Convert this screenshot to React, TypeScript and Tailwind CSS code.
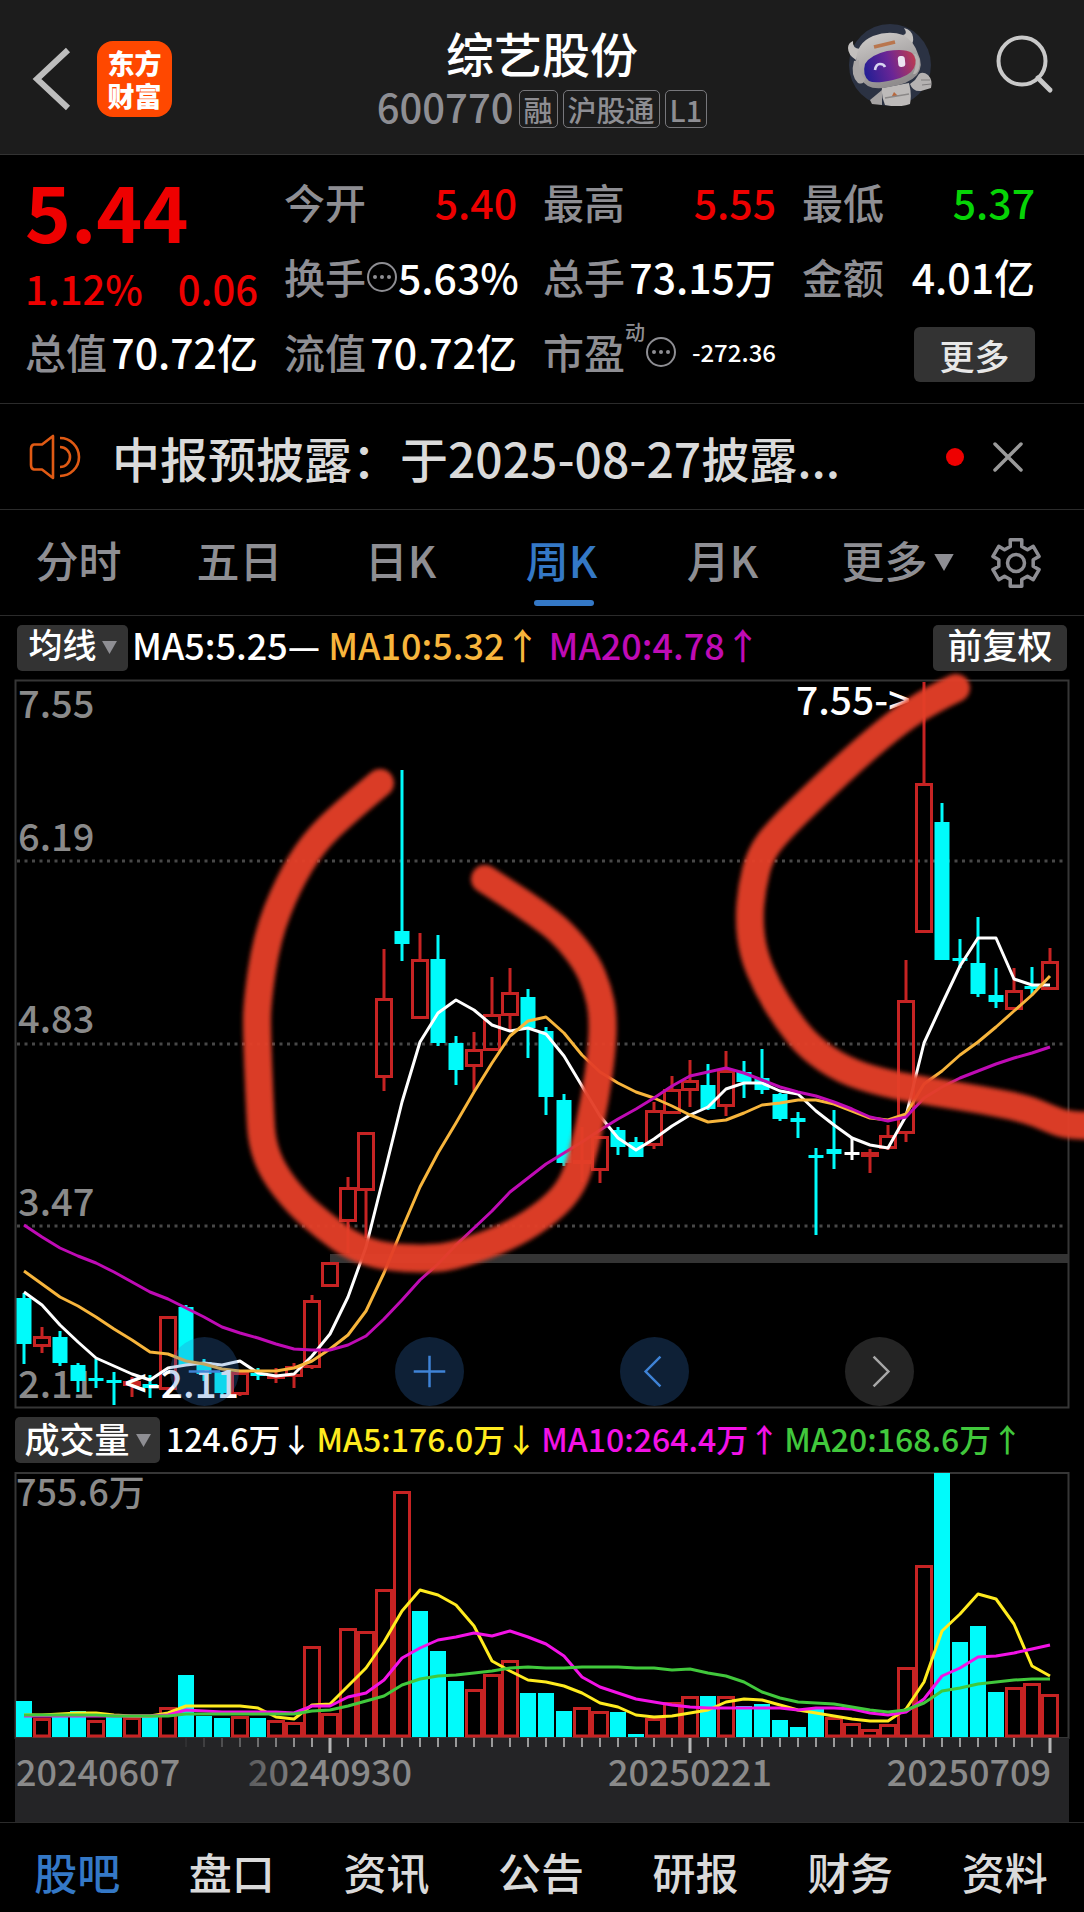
import * as React from "react";
import clsx from "clsx";

type Point = [number, number];

// top, bottom of the body, then high, low of the wick
interface Candle {
    kind: "up" | "down" | "flat";
    body: [number, number];
    wick: [number, number];
}

interface Volume {
    up: boolean;
    top: number;
}

const RED = "#c62323";
const CYAN = "#00fbfb";
const STEP = 18;
const FIRST_X = 24;

const xAt = (index: number) => FIRST_X + index * STEP;

const up = (t: number, b: number, h: number, l: number): Candle => ({ kind: "up", body: [t, b], wick: [h, l] });
const down = (t: number, b: number, h: number, l: number): Candle => ({ kind: "down", body: [t, b], wick: [h, l] });
const flat = (t: number, b: number, h: number, l: number): Candle => ({ kind: "flat", body: [t, b], wick: [h, l] });

const candles: Candle[] = [
    down(1298, 1344, 1293, 1364),
    up(1336, 1347, 1327, 1353),
    down(1337, 1363, 1331, 1366),
    down(1365, 1381, 1363, 1392),
    down(1378, 1381, 1359, 1388),
    down(1380, 1383, 1372, 1405),
    up(1381, 1386, 1377, 1397),
    down(1384, 1388, 1375, 1398),
    up(1316, 1390, 1316, 1393),
    down(1307, 1365, 1305, 1365),
    down(1362, 1374, 1359, 1381),
    down(1372, 1393, 1372, 1397),
    up(1372, 1395, 1372, 1396),
    down(1373, 1376, 1368, 1380),
    up(1376, 1379, 1368, 1383),
    up(1366, 1377, 1363, 1388),
    up(1300, 1368, 1295, 1369),
    up(1262, 1287, 1262, 1287),
    up(1187, 1222, 1177, 1253),
    up(1132, 1191, 1132, 1238),
    up(998, 1078, 949, 1091),
    down(931, 944, 770, 961),
    up(959, 1019, 933, 1019),
    down(959, 1043, 935, 1046),
    down(1043, 1070, 1036, 1085),
    up(1049, 1067, 1032, 1091),
    up(1014, 1051, 977, 1051),
    up(992, 1016, 968, 1030),
    down(997, 1028, 989, 1058),
    down(1031, 1097, 1027, 1115),
    down(1100, 1163, 1094, 1166),
    up(1160, 1164, 1127, 1182),
    up(1136, 1171, 1136, 1183),
    down(1130, 1147, 1127, 1155),
    down(1142, 1157, 1137, 1157),
    up(1110, 1146, 1102, 1149),
    up(1089, 1114, 1076, 1114),
    up(1080, 1091, 1060, 1107),
    down(1085, 1109, 1064, 1110),
    up(1070, 1107, 1051, 1116),
    down(1072, 1082, 1061, 1098),
    down(1078, 1090, 1049, 1094),
    down(1094, 1119, 1093, 1121),
    down(1118, 1122, 1112, 1138),
    down(1155, 1158, 1148, 1235),
    down(1149, 1154, 1110, 1169),
    flat(1152, 1155, 1138, 1160),
    up(1152, 1157, 1149, 1173),
    up(1135, 1149, 1125, 1150),
    up(1000, 1134, 960, 1142),
    up(783, 933, 682, 933),
    down(822, 960, 803, 960),
    down(958, 961, 939, 968),
    down(963, 994, 917, 997),
    down(995, 1002, 968, 1008),
    up(990, 1010, 968, 1010),
    down(986, 989, 967, 995),
    up(961, 990, 948, 990),
];

const priceMa5 = [
    1292, 1305, 1325, 1342, 1358, 1366, 1374, 1380, 1368, 1365, 1363, 1365, 1361, 1373, 1376, 1374, 1356, 1334, 1297, 1247,
    1175, 1102, 1042, 1013, 1000, 1010, 1025, 1031, 1028, 1034, 1056, 1086, 1116, 1138, 1150, 1139, 1126, 1115, 1107, 1089,
    1083, 1083, 1091, 1094, 1111, 1125, 1138, 1145, 1148, 1116, 1043, 1004, 966, 938, 938, 979, 985, 985,
];
const priceMa10 = [
    1271, 1284, 1297, 1306, 1317, 1329, 1340, 1352, 1354, 1361, 1364, 1369, 1371, 1371, 1371, 1368, 1361, 1349, 1335, 1311,
    1273, 1229, 1187, 1153, 1123, 1092, 1063, 1036, 1021, 1017, 1033, 1055, 1072, 1083, 1092, 1098, 1106, 1115, 1122, 1120,
    1113, 1105, 1103, 1100, 1100, 1104, 1111, 1118, 1120, 1114, 1084, 1071, 1055, 1042, 1027, 1011, 995, 976,
];
const priceMa20 = [
    1225, 1237, 1248, 1256, 1263, 1272, 1282, 1292, 1299, 1308, 1317, 1327, 1333, 1338, 1344, 1349, 1350, 1350, 1345, 1336,
    1319, 1300, 1280, 1264, 1245, 1228, 1211, 1192, 1178, 1164, 1153, 1142, 1130, 1119, 1109, 1098, 1086, 1076, 1072, 1068,
    1073, 1080, 1087, 1092, 1096, 1102, 1109, 1117, 1121, 1117, 1098, 1087, 1078, 1071, 1064, 1058, 1053, 1047,
];

const rise = (top: number): Volume => ({ up: true, top });
const fall = (top: number): Volume => ({ up: false, top });

const volumes: Volume[] = [
    fall(1701), rise(1718), fall(1716), fall(1711), rise(1720), fall(1715), rise(1717), fall(1717), rise(1707), fall(1675),
    fall(1716), fall(1718), rise(1716), fall(1718), rise(1720), rise(1722), rise(1646), rise(1713), rise(1628), rise(1631),
    rise(1589), rise(1491), fall(1611), fall(1651), fall(1681), rise(1689), rise(1674), rise(1660), fall(1693), fall(1693),
    fall(1711), rise(1707), rise(1711), fall(1712), fall(1734), rise(1718), rise(1702), rise(1696), fall(1696), rise(1696),
    fall(1706), fall(1704), fall(1720), fall(1727), fall(1709), rise(1717), rise(1723), rise(1729), rise(1724), rise(1667),
    rise(1565), fall(1473), fall(1642), fall(1626), fall(1692), rise(1687), rise(1683), rise(1694),
];

const volumeMa5 = [
    1715, 1715, 1714, 1713, 1713, 1715, 1716, 1716, 1713, 1706, 1706, 1706, 1706, 1708, 1717, 1719, 1705, 1704, 1686, 1668,
    1642, 1611, 1590, 1595, 1605, 1626, 1661, 1671, 1680, 1682, 1686, 1693, 1703, 1707, 1715, 1717, 1716, 1713, 1710, 1702,
    1699, 1700, 1705, 1710, 1713, 1716, 1719, 1721, 1721, 1709, 1682, 1631, 1614, 1594, 1599, 1624, 1666, 1676,
];
const volumeMa10 = [
    1716, 1716, 1716, 1716, 1716, 1716, 1716, 1716, 1715, 1710, 1711, 1712, 1712, 1712, 1712, 1713, 1706, 1706, 1697, 1693,
    1680, 1658, 1648, 1640, 1637, 1633, 1636, 1631, 1637, 1644, 1656, 1677, 1687, 1693, 1699, 1702, 1705, 1707, 1708, 1708,
    1708, 1708, 1708, 1710, 1708, 1708, 1709, 1713, 1715, 1712, 1699, 1676, 1668, 1657, 1656, 1653, 1649, 1645,
];
const volumeMa20 = [
    1715, 1715, 1715, 1715, 1715, 1716, 1716, 1716, 1716, 1714, 1714, 1714, 1714, 1714, 1714, 1714, 1711, 1710, 1706, 1701,
    1696, 1685, 1679, 1676, 1675, 1673, 1671, 1668, 1667, 1668, 1668, 1667, 1667, 1667, 1668, 1668, 1670, 1669, 1673, 1676,
    1682, 1692, 1698, 1702, 1703, 1704, 1707, 1710, 1712, 1710, 1703, 1691, 1688, 1684, 1682, 1680, 1679, 1679,
];

// hand-drawn marker strokes over the price chart
const leftMark: Point[] = [
    [380, 783], [345, 812], [313, 843], [288, 884], [267, 937], [257, 1003], [257, 1037], [260, 1110], [262, 1143],
    [273, 1172], [297, 1203], [325, 1227], [353, 1247], [385, 1257], [427, 1259], [455, 1256], [511, 1236], [551, 1210],
    [573, 1185], [584, 1150], [595, 1100], [602, 1050], [603, 1015], [598, 990], [587, 963], [563, 933], [537, 913],
    [510, 895], [485, 879],
];
const rightMark: Point[] = [
    [956, 688], [933, 699], [900, 720], [860, 753], [817, 793], [777, 832], [760, 855], [752, 887], [749, 920],
    [753, 953], [767, 987], [787, 1020], [810, 1048], [843, 1070], [883, 1083], [933, 1092], [983, 1100], [1027, 1109],
    [1048, 1118], [1066, 1125], [1100, 1126],
];

function smoothPath(points: Point[]) {
    let d = `M${points[0][0]} ${points[0][1]}`;
    for (let i = 1; i < points.length - 1; i++) {
        const [x, y] = points[i];
        const [nx, ny] = points[i + 1];
        d += ` Q${x} ${y} ${(x + nx) / 2} ${(y + ny) / 2}`;
    }
    const last = points[points.length - 1];
    return `${d} L${last[0]} ${last[1]}`;
}

function Average({ values, color }: { values: number[]; color: string }) {
    return (
        <polyline
            points={values.map((y, i) => `${xAt(i)},${y}`).join(" ")}
            fill="none"
            stroke={color}
            strokeWidth="3"
            strokeLinejoin="round"
        />
    );
}

function CandleShape({ candle, x }: { candle: Candle; x: number }) {
    const [top, bottom] = candle.body;
    const [high, low] = candle.wick;

    if (candle.kind === "up" && bottom - top > 8) {
        return (
            <g stroke={RED} strokeWidth="3" fill="none">
                {high < top && <line x1={x} x2={x} y1={high} y2={top} />}
                {low > bottom && <line x1={x} x2={x} y1={bottom} y2={low} />}
                <rect x={x - 7.5} y={top + 1.5} width="15" height={bottom - top - 3} />
            </g>
        );
    }

    const color = candle.kind === "up" ? RED : candle.kind === "down" ? CYAN : "#fff";
    const half = candle.kind === "up" ? 9 : 7.5;
    return (
        <g fill={color}>
            <rect x={x - 1.5} y={high} width="3" height={low - high} />
            <rect x={x - half} y={top} width={half * 2} height={bottom - top} />
        </g>
    );
}

function PriceChart() {
    const labels = [
        { y: 718, text: "7.55" },
        { y: 851, text: "6.19" },
        { y: 1033, text: "4.83" },
        { y: 1216, text: "3.47" },
        { y: 1398, text: "2.11" },
    ];
    return (
        <svg viewBox="0 680 1084 728" className="block w-full overflow-visible" role="img" aria-label="周K线图">
            <defs>
                <filter id="marker" x="-10%" y="-10%" width="120%" height="120%">
                    <feGaussianBlur stdDeviation="2" />
                </filter>
            </defs>
            <rect x="15.5" y="680.5" width="1053" height="727" fill="none" stroke="#363636" strokeWidth="2" />
            {[861, 1044, 1226].map((y) => (
                <line key={y} x1="17" x2="1067" y1={y} y2={y} stroke="#484848" strokeWidth="3" strokeDasharray="3 4.5" />
            ))}
            <rect x="330" y="1254" width="738" height="9" fill="#343434" />
            <g fill="#8a8a8a" fontSize="38">
                {labels.map((label) => (
                    <text key={label.text} x="18" y={label.y}>
                        {label.text}
                    </text>
                ))}
            </g>
            {candles.map((candle, i) => (
                <CandleShape key={i} candle={candle} x={xAt(i)} />
            ))}
            <Average values={priceMa5} color="#ffffff" />
            <Average values={priceMa10} color="#f7b53c" />
            <Average values={priceMa20} color="#bf0bb5" />
            <g fill="#fff" fontSize="39">
                <text x="796" y="715">7.55-&gt;</text>
                <text x="239" y="1398" textAnchor="end">&lt;-2.11</text>
            </g>
            <g
                fill="none"
                stroke="#e33f26"
                strokeOpacity="0.96"
                strokeWidth="28"
                strokeLinecap="round"
                strokeLinejoin="round"
                filter="url(#marker)"
            >
                <path d={smoothPath(leftMark)} />
                <path d={smoothPath(rightMark)} />
            </g>
        </svg>
    );
}

function VolumeChart() {
    const floor = 1737;
    const major = [17, 37, 57];
    return (
        <svg viewBox="0 1472 1084 350" className="block w-full" role="img" aria-label="成交量图">
            <defs>
                <linearGradient id="fade" gradientUnits="userSpaceOnUse" x1="180" x2="310" y1="0" y2="0">
                    <stop offset="0" stopColor="#2a2a2c" />
                    <stop offset="1" stopColor="#9a9a9a" />
                </linearGradient>
                <linearGradient id="fadeText" gradientUnits="userSpaceOnUse" x1="225" x2="310" y1="0" y2="0">
                    <stop offset="0" stopColor="#4a4a4c" />
                    <stop offset="1" stopColor="#8a8a8a" />
                </linearGradient>
            </defs>
            <rect x="15.5" y="1473" width="1053" height="265" fill="none" stroke="#363636" strokeWidth="2" />
            <rect x="15" y="1738" width="1054" height="84" fill="#242426" />
            <text x="16" y="1506" fill="#8a8a8a" fontSize="36">
                755.6万
            </text>
            {volumes.map((volume, i) =>
                volume.up ? (
                    <rect
                        key={i}
                        x={xAt(i) - 7.5}
                        y={volume.top + 1.5}
                        width="15"
                        height={floor - volume.top - 2.5}
                        fill="none"
                        stroke={RED}
                        strokeWidth="3"
                    />
                ) : (
                    <rect key={i} x={xAt(i) - 8} y={volume.top} width="16" height={floor - volume.top} fill={CYAN} />
                ),
            )}
            <Average values={volumeMa5} color="#ffeb1f" />
            <Average values={volumeMa10} color="#f312e6" />
            <Average values={volumeMa20} color="#41c83c" />
            {volumes.map((_, i) =>
                i < 9 ? null : (
                    <rect
                        key={i}
                        x={xAt(i) - (major.includes(i) ? 1.5 : 1)}
                        y="1738"
                        width={major.includes(i) ? 3 : 2}
                        height={major.includes(i) ? 15 : 9}
                        fill={major.includes(i) ? "#b5b5b5" : "url(#fade)"}
                    />
                ),
            )}
            <g fill="#8a8a8a" fontSize="36">
                <text x="16" y="1786">20240607</text>
                <text x="330" y="1786" textAnchor="middle" fill="url(#fadeText)">20240930</text>
                <text x="690" y="1786" textAnchor="middle">20250221</text>
                <text x="1051" y="1786" textAnchor="end">20250709</text>
            </g>
        </svg>
    );
}

function MascotAvatar() {
    return (
        <svg viewBox="0 0 106 106" className="size-[106px]" aria-hidden="true">
            <defs>
                <linearGradient id="visor" x1="0" x2="1" y1="0.6" y2="0.4">
                    <stop offset="0" stopColor="#251f94" />
                    <stop offset="0.5" stopColor="#6a2596" />
                    <stop offset="1" stopColor="#b83a55" />
                </linearGradient>
                <linearGradient id="shell" x1="0" x2="0.4" y1="0" y2="1">
                    <stop offset="0" stopColor="#d2cfcd" />
                    <stop offset="1" stopColor="#8f8c8d" />
                </linearGradient>
                <clipPath id="disc">
                    <path d="M0 0H106V76H82A41 41 0 0 1 24 76H0Z M10 60H96V92H10Z" />
                </clipPath>
            </defs>
            <circle cx="53" cy="51" r="41" fill="#2b3243" />
            <g clipPath="url(#disc)">
                <path d="M45 74L72 69Q75 80 73 90Q62 94 48 91Q44 82 45 74Z" fill="#bdbab9" />
                <path d="M45 76L33 86L35 90L45 91Z" fill="#a5a2a2" />
                <path d="M73 70Q76 78 84 77L94 74Q96 66 91 61Q86 57 82 60L78 66Z" fill="#b5b2b2" />
                <path d="M84 66L93 66M85 71L94 70" stroke="#7f7c7d" strokeWidth="1" />
                <path d="M57 78L61 82L55 82Z" fill="#b8673c" />
                <path d="M48 84L72 80" stroke="#8b8888" strokeWidth="1.5" />
            </g>
            <path d="M19 46Q11 41 11 34Q11 29 16 27Q15 34 23 35Z" fill="#c3c0be" />
            <path d="M66 21Q71 20 67 14Q75 16 76 23Q77 29 73 32Z" fill="#c3c0be" />
            <path d="M19 48Q19 29 36 22Q52 16 66 21Q77 27 81 40Q87 51 80 61Q72 70 52 73Q30 78 24 64Q19 57 19 48Z" fill="url(#shell)" />
            <path d="M17 47Q13 61 21 69Q27 71 28 65Q21 58 22 46Z" fill="#aaa7a7" />
            <path d="M79 40Q84 45 82 54Q80 61 76 60Q81 50 77 40Z" fill="#b5b1b0" />
            <path d="M28 50Q33 41 50 37Q68 34 75 39Q81 45 77 54Q73 62 56 66Q38 70 32 67Q25 61 28 50Z" fill="url(#visor)" />
            <path d="M38 56Q39 50 43 50Q47 50 48 53" fill="none" stroke="#d8d5f0" strokeWidth="2.6" />
            <rect x="61" y="42" width="7" height="11" rx="3" fill="#ece4f2" transform="rotate(-6 64 47)" />
            <path d="M37 33L58 28" stroke="#b9764e" strokeWidth="3.6" />
        </svg>
    );
}

function GearIcon() {
    // six flat teeth, each spanning 60 degrees of the rim
    const points = [0, 1, 2, 3, 4, 5].flatMap((tooth) =>
        [
            [-19, 17.5],
            [-14, 24],
            [14, 24],
            [19, 17.5],
        ].map(([offset, radius]) => {
            const angle = ((tooth * 60 + offset) * Math.PI) / 180;
            return `${(26 + radius * Math.sin(angle)).toFixed(2)},${(26 - radius * Math.cos(angle)).toFixed(2)}`;
        }),
    );
    return (
        <svg viewBox="0 0 52 52" className="size-[52px]" fill="none" stroke="#8e8e93" strokeWidth="3.5" aria-hidden="true">
            <polygon points={points.join(" ")} strokeLinejoin="round" />
            <circle cx="26" cy="26" r="8.5" />
        </svg>
    );
}

function MoreDots() {
    return (
        <svg viewBox="0 0 32 32" className="size-[32px] shrink-0" aria-hidden="true">
            <circle cx="16" cy="16" r="14" fill="none" stroke="#8e8e93" strokeWidth="2" />
            <circle cx="9" cy="16" r="2" fill="#8e8e93" />
            <circle cx="16" cy="16" r="2" fill="#8e8e93" />
            <circle cx="23" cy="16" r="2" fill="#8e8e93" />
        </svg>
    );
}

function Triangle({ className }: { className?: string }) {
    return (
        <svg viewBox="0 0 16 14" className={className} fill="#8e8e93" aria-hidden="true">
            <path d="M0 0H16L8 14Z" />
        </svg>
    );
}

interface QuoteProps {
    label: string;
    value: string;
    className?: string;
    info?: boolean;
}

function Quote({ label, value, className = "text-white", info }: QuoteProps) {
    return (
        <div className="flex items-center justify-between whitespace-nowrap">
            <dt className="flex items-center text-[#8e8e93]">
                {label}
                {info && <MoreDots />}
            </dt>
            <dd className={className}>{value}</dd>
        </div>
    );
}

function Header() {
    return (
        <header className="grid h-[155px] grid-cols-[1fr_auto_1fr] border-b border-[#333] bg-[#1c1c1c]">
            <div className="flex items-center pt-[4px] pl-[31px]">
                <button type="button" aria-label="返回" className="mr-[24px]">
                    <svg viewBox="0 0 42 64" className="h-[64px] w-[42px]" fill="none" stroke="#bdbdbd" strokeWidth="6">
                        <path d="M37 3L6 32L37 61" />
                    </svg>
                </button>
                <a
                    href="#home"
                    className="flex h-[76px] w-[75px] flex-col items-center justify-center rounded-[16px] bg-[#ff4800] text-[27px] leading-[33px] font-black text-white"
                >
                    <span>东方</span>
                    <span>财富</span>
                </a>
            </div>
            <div className="flex flex-col items-center pt-[24px]">
                <h1 className="text-[48px] leading-[56px] font-medium text-white">综艺股份</h1>
                <div className="flex items-end gap-[5px] text-[#8e8e93]">
                    <span className="text-[40px] leading-[52px]">600770</span>
                    {["融", "沪股通", "L1"].map((tag) => (
                        <span
                            key={tag}
                            className="mb-[4px] rounded-[5px] border border-[#77777b] px-[4px] text-[29px] leading-[36px]"
                        >
                            {tag}
                        </span>
                    ))}
                </div>
            </div>
            <div className="flex items-start justify-end pt-[14px] pr-[29px]">
                <a href="#assistant" aria-label="智能助手">
                    <MascotAvatar />
                </a>
                <button type="button" aria-label="搜索" className="mt-[20px] ml-[52px]">
                    <svg viewBox="0 0 60 60" className="size-[60px]" fill="none" stroke="#c9c9c9" strokeWidth="4">
                        <circle cx="27" cy="27" r="23.5" />
                        <path d="M43 44L55 56" strokeLinecap="round" strokeWidth="5" />
                    </svg>
                </button>
            </div>
        </header>
    );
}

function QuotePanel() {
    return (
        <section className="grid grid-cols-4 gap-x-[26px] border-b border-[#2b2b2b] pt-[9px] pr-[49px] pb-[14px] pl-[25px] text-[41px] leading-[75px]">
            <div className="row-span-2 text-[#ee0000]">
                <p className="text-[78px] leading-[90px] font-bold">5.44</p>
                <p className="mt-[8px] flex justify-between text-[40px] leading-[52px]">
                    <span>1.12%</span>
                    <span>0.06</span>
                </p>
            </div>
            <dl className="contents">
                <Quote label="今开" value="5.40" className="text-[#ee0000]" />
                <Quote label="最高" value="5.55" className="text-[#ee0000]" />
                <Quote label="最低" value="5.37" className="text-[#06d406]" />
                <Quote label="换手" value="5.63%" info />
                <Quote label="总手" value="73.15万" />
                <Quote label="金额" value="4.01亿" />
                <Quote label="总值" value="70.72亿" />
                <Quote label="流值" value="70.72亿" />
                <div className="flex items-center justify-between whitespace-nowrap">
                    <dt className="flex items-center text-[#8e8e93]">
                        市盈
                        <sup className="top-0 self-start pt-[8px] text-[20px] leading-[20px]">动</sup>
                        <MoreDots />
                    </dt>
                    <dd className="text-[24px] text-white">-272.36</dd>
                </div>
            </dl>
            <button
                type="button"
                className="mt-[6px] h-[55px] w-[121px] self-center justify-self-end rounded-[6px] bg-[#333] text-[35px] leading-[53px] text-[#e8e8e8]"
            >
                更多
            </button>
        </section>
    );
}

function Notice() {
    return (
        <section className="flex h-[106px] items-center border-b border-[#2b2b2b] pr-[60px] pl-[28px]">
            <svg viewBox="0 0 54 46" className="h-[46px] w-[54px]" fill="none" stroke="#e05a14" strokeWidth="2.6" aria-hidden="true">
                <path d="M25 2V44L14 35.5H6Q3 35 3 31V15Q3 11 6 10.5H14Z" strokeLinejoin="round" />
                <path d="M32 4A19 19 0 0 1 32 42" />
                <path d="M32 13A10 10 0 0 1 32 33" />
            </svg>
            <a href="#notice" className="ml-[30px] flex-1 truncate text-[48px] leading-[70px] text-[#dadada]">
                中报预披露：于2025-08-27披露...
            </a>
            <span className="size-[18px] rounded-full bg-[#ee0000]" />
            <button type="button" aria-label="关闭" className="ml-[28px]">
                <svg viewBox="0 0 32 32" className="size-[32px]" stroke="#9a9a9a" strokeWidth="3.5" strokeLinecap="round">
                    <path d="M3 3L29 29M29 3L3 29" />
                </svg>
            </button>
        </section>
    );
}

function PeriodTabs() {
    const tabs = ["分时", "五日", "日K", "周K", "月K"];
    return (
        <nav className="grid h-[106px] grid-cols-[repeat(5,161fr)_185fr_52fr] border-b border-[#2b2b2b] pr-[42px] text-[43px] text-[#8e8e93]">
            {tabs.map((tab) => (
                <button
                    key={tab}
                    type="button"
                    className={clsx("relative pr-[4px] pb-[6px]", tab === "周K" && "text-[#3478c6]")}
                >
                    {tab}
                    {tab === "周K" && (
                        <span className="absolute bottom-[9px] left-1/2 h-[6px] w-[60px] -translate-x-1/2 rounded-full bg-[#3478c6]" />
                    )}
                </button>
            ))}
            <button type="button" className="flex items-center justify-center gap-[6px] pb-[6px]">
                更多
                <Triangle className="mt-[6px] h-[17px] w-[20px]" />
            </button>
            <button type="button" aria-label="设置" className="flex items-center justify-center">
                <GearIcon />
            </button>
        </nav>
    );
}

function PriceIndicators() {
    return (
        <div className="flex h-[64px] items-start pt-[9px] pr-[17px] pl-[17px] text-[36px] leading-[38px] whitespace-nowrap">
            <button
                type="button"
                className="mr-[4px] flex h-[46px] w-[111px] items-start justify-center gap-[5px] rounded-[5px] bg-[#333] text-[34px] text-white"
            >
                均线
                <Triangle className="mt-[16px] h-[13px] w-[15px]" />
            </button>
            <span className="mr-[8px] text-white">MA5:5.25—</span>
            <span className="mr-[8px] text-[#f7b53c]">MA10:5.32↑</span>
            <span className="text-[#bf0bb5]">MA20:4.78↑</span>
            <button
                type="button"
                className="ml-auto h-[46px] w-[134px] rounded-[5px] bg-[#333] pb-[8px] text-[35px] text-white"
            >
                前复权
            </button>
        </div>
    );
}

function ChartControls() {
    const blue = "bg-[#3478c6]/27 text-[#3f83d6]";
    const controls = [
        { label: "缩小", d: "M19 35H51", className: blue },
        { label: "放大", d: "M19 35H51M35 19V51", className: blue },
        { label: "向左", d: "M41 20L26 35L41 50", className: blue },
        { label: "向右", d: "M29 20L44 35L29 50", className: "bg-white/14 text-[#a8a8a8]" },
    ];
    return (
        <div className="absolute inset-x-0 bottom-[2px] flex justify-between px-[170px]">
            {controls.map((control) => (
                <button
                    key={control.label}
                    type="button"
                    aria-label={control.label}
                    className={clsx("size-[69px] rounded-full", control.className)}
                >
                    <svg viewBox="0 0 70 70" className="size-full" fill="none" stroke="currentColor" strokeWidth="2.5">
                        <path d={control.d} />
                    </svg>
                </button>
            ))}
        </div>
    );
}

function VolumeIndicators() {
    return (
        <div className="flex h-[64px] items-start gap-[4px] pt-[9px] pl-[15px] text-[32px] leading-[42px] whitespace-nowrap">
            <button
                type="button"
                className="mr-[2px] flex h-[46px] w-[145px] items-start justify-center gap-[6px] rounded-[5px] bg-[#333] text-[35px] text-white"
            >
                成交量
                <Triangle className="mt-[17px] h-[13px] w-[15px]" />
            </button>
            <span className="text-white">124.6万↓</span>
            <span className="text-[#ffeb1f]">MA5:176.0万↓</span>
            <span className="text-[#f312e6]">MA10:264.4万↑</span>
            <span className="text-[#41c83c]">MA20:168.6万↑</span>
        </div>
    );
}

function BottomNav() {
    const items = ["股吧", "盘口", "资讯", "公告", "研报", "财务", "资料"];
    return (
        <nav className="grid h-[90px] grid-cols-7 border-t border-[#2b2b2b] pt-[7px] pr-[2px] text-[43px]">
            {items.map((item, index) => (
                <a
                    key={item}
                    href={`#${item}`}
                    className={clsx(
                        "flex items-center justify-center",
                        index === 0 ? "text-[#3478c6]" : "text-[#dadada]",
                    )}
                >
                    {item}
                </a>
            ))}
        </nav>
    );
}

export default function App() {
    return (
        <div className="min-h-screen overflow-x-hidden bg-black font-['Noto_Sans_CJK_SC','Noto_Sans',sans-serif] font-medium">
            <Header />
            <main>
                <QuotePanel />
                <Notice />
                <PeriodTabs />
                <PriceIndicators />
                <div className="relative">
                    <PriceChart />
                    <ChartControls />
                </div>
                <VolumeIndicators />
                <VolumeChart />
            </main>
            <BottomNav />
        </div>
    );
}
